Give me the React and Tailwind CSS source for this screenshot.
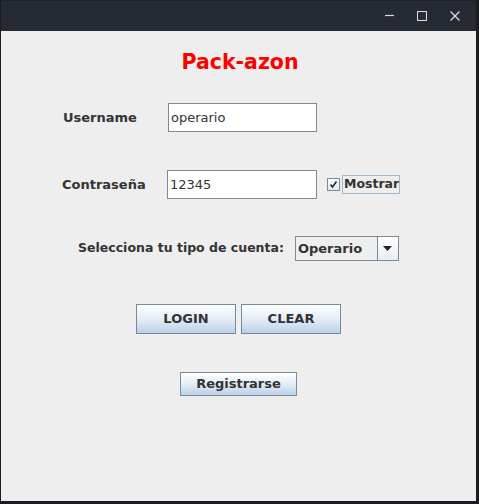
import React from "react";

const F = { fontFamily: '"DejaVu Sans", sans-serif' };

function Btn({ w, h, children }) {
  return (
    <div
      className={`${w} ${h} flex items-center justify-center border border-[#7a8a99] bg-linear-to-b from-[#ffffff] via-[#e4edf6] to-[#bcd0e7] text-[13px] font-bold text-[#333333]`}
    >
      {children}
    </div>
  );
}

export default function App() {
  return (
    <div className="w-[479px] h-[504px] bg-[#1b1c1f] overflow-hidden" style={F}>
      <div className="ml-px w-[475px] h-[501px] flex flex-col">
        <div className="h-[31px] bg-[#262a33] border-t border-[#1f2229] flex items-center justify-end pr-[16px]">
          <svg width="10" height="10" viewBox="0 0 10 10" className="mr-[22px]">
            <line x1="0" y1="4.5" x2="9" y2="4.5" stroke="#d6d8dc" strokeWidth="1.2" />
          </svg>
          <svg width="10" height="10" viewBox="0 0 10 10" className="mr-[23px]">
            <rect x="0.5" y="0.5" width="9" height="9" fill="none" stroke="#d6d8dc" strokeWidth="1.1" />
          </svg>
          <svg width="10" height="10" viewBox="0 0 10 10">
            <line x1="0.5" y1="0.5" x2="9.5" y2="9.5" stroke="#d6d8dc" strokeWidth="1.2" />
            <line x1="9.5" y1="0.5" x2="0.5" y2="9.5" stroke="#d6d8dc" strokeWidth="1.2" />
          </svg>
        </div>
        <div className="flex-1 bg-[#eeeeee] flex flex-col">
          <div className="mt-[19px] h-[24px] flex items-center justify-center pl-[3px] text-[20.5px] font-bold text-[#ff0000] leading-[24px]">
            Pack-azon
          </div>

          <div className="mt-[29px] h-[29px] flex items-center pl-[62px]">
            <div className="w-[105px] text-[13px] font-bold text-[#333333]">Username</div>
            <div className="w-[149px] h-[29px] border border-[#7a8a99] bg-white flex items-center pl-[2px] text-[13px] text-[#333333]">
              operario
            </div>
          </div>

          <div className="mt-[38px] h-[29px] flex items-center pl-[61px]">
            <div className="w-[105px] text-[13px] font-bold text-[#333333]">Contraseña</div>
            <div className="w-[150px] h-[29px] border border-[#7a8a99] bg-white flex items-center pl-[2px] text-[13px] text-[#333333]">
              12345
            </div>
            <div className="ml-[10px] w-[13px] h-[13px] border border-[#7a8a99] bg-linear-to-b from-white to-[#dfe7f0] flex items-center justify-center">
              <svg width="9" height="9" viewBox="0 0 9 9">
                <path d="M1.5 4.5 L3.5 7 L7.5 1.5" fill="none" stroke="#222" strokeWidth="1.5" />
              </svg>
            </div>
            <div className="ml-[2px] h-[19px] w-[58px] border border-[#a3b8cc] flex items-center pl-[1px] text-[12.5px] font-bold text-[#333333] whitespace-nowrap overflow-hidden">
              Mostrar
            </div>
          </div>

          <div className="mt-[37px] h-[25px] flex items-center justify-center gap-[11px]">
            <div className="text-[12.5px] font-bold text-[#333333]">Selecciona tu tipo de cuenta:</div>
            <div className="w-[104px] h-[25px] border border-[#7a8a99] bg-[#eeeeee] flex">
              <div className="flex-1 flex items-center pl-[2px] text-[13px] font-bold text-[#333333]">
                Operario
              </div>
              <div className="w-[21px] h-full border-l border-[#7a8a99] bg-linear-to-b from-white to-[#e8edf2] flex items-center justify-center">
                <svg width="9" height="5" viewBox="0 0 9 5">
                  <path d="M0 0 L9 0 L4.5 5 Z" fill="#222" />
                </svg>
              </div>
            </div>
          </div>

          <div className="mt-[43px] h-[30px] flex items-center justify-center gap-[5px]">
            <Btn w="w-[100px]" h="h-[30px]">LOGIN</Btn>
            <Btn w="w-[100px]" h="h-[30px]">CLEAR</Btn>
          </div>

          <div className="mt-[38px] h-[24px] flex items-center justify-center">
            <Btn w="w-[117px]" h="h-[24px]">Registrarse</Btn>
          </div>
        </div>
      </div>
    </div>
  );
}
